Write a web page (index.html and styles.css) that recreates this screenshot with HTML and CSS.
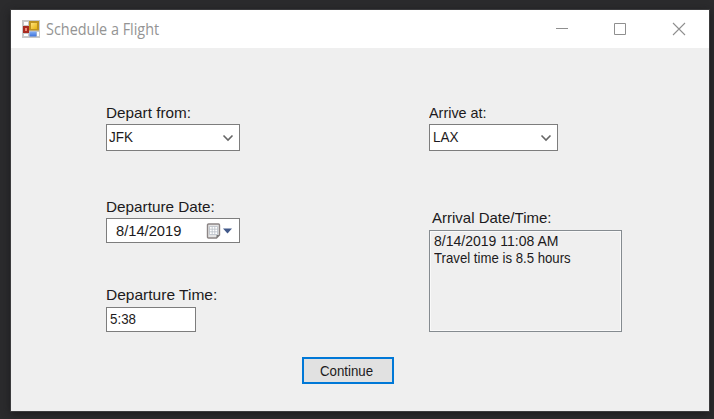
FILE: index.html
```
<!DOCTYPE html>
<html lang="en">
<head>
<meta charset="utf-8">
<title>Schedule a Flight</title>
<link rel="stylesheet" href="styles.css">
</head>
<body>
<main class="window">
  <header class="titlebar">
    <svg class="app-icon" width="18" height="18" viewBox="0 0 18 18">
      <defs>
        <linearGradient id="gold" x2="1" y2="1"><stop stop-color="#ffe27a"/><stop offset="1" stop-color="#e5b20c"/></linearGradient>
        <linearGradient id="blue" y2="1" x2="0"><stop stop-color="#86b0f5"/><stop offset="1" stop-color="#3c72dc"/></linearGradient>
      </defs>
      <rect width="18" height="18" fill="#c8c8c8"/>
      <path d="M2 2h4v3H2zM2 14h4v2H2zM15 12h2v4h-2z" fill="#fff"/>
      <rect x="7" y="1" width="10" height="9.5" fill="#bd9220"/>
      <rect x="9" y="3" width="6" height="6" fill="url(#gold)"/>
      <rect x="1" y="6" width="6" height="7" fill="#a92b21"/>
      <rect x="3" y="8" width="2" height="3" fill="#ef8a78"/>
      <rect x="7.5" y="11.5" width="7" height="5" fill="url(#blue)"/>
    </svg>
    <h1 class="title">Schedule a Flight</h1>
    <svg class="controls" width="130" height="14" viewBox="0 0 130 14" fill="none" stroke="#8f8f8f">
      <path d="M0 6.500h12M58.500 1.500h11v11h-11z"/>
      <path d="M117 1l12 12M129 1l-12 12" stroke-width="1.100"/>
    </svg>
  </header>
  <form class="form">
    <section class="column departure">
      <label class="label from">Depart from:</label>
      <div class="field select"><span class="value airport">JFK</span>
        <svg width="12" height="8" viewBox="0 0 12 8" fill="none" stroke="#666" stroke-width="1.600"><path d="M1.500 1.500l4.500 4.500 4.500-4.500"/></svg>
      </div>
      <label class="label date-label">Departure Date:</label>
      <div class="field date"><span class="value day">8/14/2019</span>
        <svg width="26" height="16" viewBox="0 0 26 16">
          <path d="M2.500 1h10q1 0 1 1v10l-3 3h-8q-1 0-1-1V2q0-1 1-1z" fill="#e4e4e4" stroke="#8c8585" stroke-width="1.400"/>
          <path d="M3.500 3.500h8v8h-8zM3.500 6.200h8M3.500 8.800h8M6.200 3.500v8M8.800 3.500v8" fill="#fff" stroke="#b9bfc8" stroke-width=".8"/>
          <path d="M10.500 15v-3h3z" fill="#777"/>
          <path d="M17 5.500h9l-4.500 5z" fill="#41598a"/>
        </svg>
      </div>
      <label class="label time-label">Departure Time:</label>
      <div class="field time"><span class="value clock">5:38</span></div>
    </section>
    <button class="continue" type="button"><span class="value go">Continue</span></button>
    <section class="column arrival">
      <label class="label at">Arrive at:</label>
      <div class="field select"><span class="value airport lax">LAX</span>
        <svg width="12" height="8" viewBox="0 0 12 8" fill="none" stroke="#666" stroke-width="1.600"><path d="M1.500 1.500l4.500 4.500 4.500-4.500"/></svg>
      </div>
      <label class="label result-label">Arrival Date/Time:</label>
      <output class="result"><span class="value when">8/14/2019 11:08 AM</span><span class="value travel">Travel time is 8.5 hours</span></output>
    </section>
  </form>
</main>
</body>
</html>
```
FILE: styles.css
```
* { box-sizing: border-box; }
body {
  margin: 0;
  height: 419px;
  padding: 10px 5px 8px 11px;
  overflow: hidden;
  background: #2b2b2d;
  font: 15px/18px "Liberation Sans", Arial, sans-serif;
  color: #1c1a20;
}
.window {
  height: 401px;
  background: #efefef;
  box-shadow: 0 0 0 1px #3b3b3d, 0 2px 8px #171719;
}
.titlebar {
  display: flex;
  align-items: center;
  height: 38px;
  padding: 0 23px 0 11px;
  background: #fff;
}
.title {
  margin: 0 auto 0 6px;
  font: 15.500px/20px "Open Sans", "Noto Sans", sans-serif;
  color: #949494;
  white-space: nowrap;
  transform: scaleX(.93);
  transform-origin: 0 50%;
}
.form {
  display: flex;
  padding: 56px 0 0 95px;
}
.column {
  display: flex;
  flex-direction: column;
  align-items: flex-start;
}
.departure { width: 134px; }
.arrival { width: 193px; margin-left: 35px; }
.label, .value {
  display: block;
  white-space: nowrap;
  transform-origin: 0 50%;
}
.label { height: 18px; }
.field {
  display: flex;
  align-items: center;
  width: 134px;
  border: 1px solid #7d7d7d;
  background: #fff;
  padding-left: 3px;
}
.field svg { margin-left: auto; }
.select { height: 27px; margin-top: 2px; padding: 0 5px 0 2px; }
.select .value { margin-top: -2px; }
.arrival .select { width: 129px; padding-left: 3px; }
.date-label { margin-top: 47px; }
.date { height: 25px; margin-top: 2px; padding: 0 7px 0 9px; }
.time-label { margin-top: 43px; }
.time { width: 90px; height: 25px; margin-top: 3px; }
.time .value { margin-top: -2px; }
.result-label { margin: 58px 0 0 3px; }
.result {
  display: block;
  width: 193px;
  height: 102px;
  margin-top: 3px;
  padding: 1px 0 0 4px;
  border: 1px solid #858b90;
  box-shadow: inset 0 0 0 1px #f9f9f9;
  line-height: 17px;
}
.continue {
  width: 92px;
  height: 27px;
  margin-top: 253px;
  padding: 0 0 0 16px;
  border: 2px solid #0078d7;
  background: #e1e1e1;
  font: inherit;
  color: inherit;
  text-align: left;
  margin-left: 62px;
}
.from { transform: scaleX(1.02); }
.date-label { transform: scaleX(1.02); }
.time-label { transform: scaleX(1.035); }
.at { transform: scaleX(.96); }
.airport { transform: scaleX(.9); }
.day { transform: scaleX(.98); }
.clock { transform: scaleX(.89); }
.when { transform: scaleX(.935); }
.travel { transform: scaleX(.88); }
.go { transform: scaleX(.885); }
```
